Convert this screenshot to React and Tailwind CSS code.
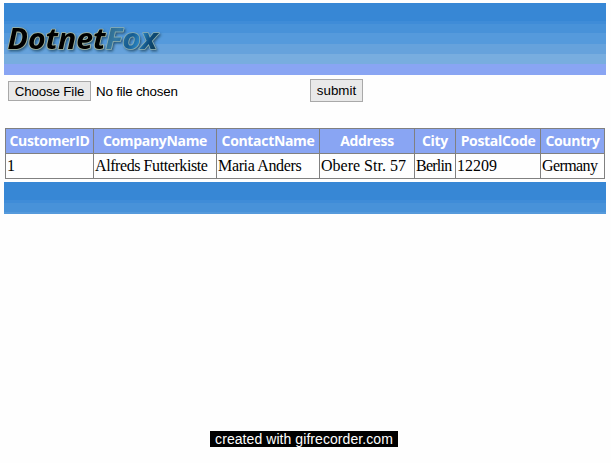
const columns = [
  { name: "CustomerID", value: "1", tracking: "tracking-normal" },
  { name: "CompanyName", value: "Alfreds Futterkiste", tracking: "tracking-[-0.42px]" },
  { name: "ContactName", value: "Maria Anders", tracking: "tracking-[-0.35px]" },
  { name: "Address", value: "Obere Str. 57", tracking: "tracking-normal" },
  { name: "City", value: "Berlin", tracking: "tracking-[-0.75px]" },
  { name: "PostalCode", value: "12209", tracking: "tracking-normal" },
  { name: "Country", value: "Germany", tracking: "tracking-[-0.6px]" },
];

function Logo() {
  return (
    <svg className="mt-1 h-14 w-[180px]" viewBox="0 0 180 56" role="img" aria-label="DotnetFox">
      <defs>
        <linearGradient id="fox" gradientUnits="userSpaceOnUse" x1="102" y1="20" x2="153" y2="42">
          <stop offset="0" stopColor="#2c6685" />
          <stop offset=".25" stopColor="#3579a4" />
          <stop offset=".5" stopColor="#155c91" />
          <stop offset=".65" stopColor="#2b84c2" />
          <stop offset=".82" stopColor="#0c4c7c" />
          <stop offset="1" stopColor="#123a50" />
        </linearGradient>
        <filter id="shade" x="-10%" y="-10%" width="120%" height="140%">
          <feDropShadow dx="1.3" dy="1.6" stdDeviation="0.8" floodColor="#234c66" floodOpacity=".8" />
        </filter>
      </defs>
      <g
        className="[font-family:'Open_Sans','Noto_Sans',sans-serif]"
        fontSize="29"
        fontWeight="700"
        fontStyle="italic"
        filter="url(#shade)"
        paintOrder="stroke"
        strokeLinejoin="round"
      >
        <text x="3.5" y="42" textLength="98" lengthAdjust="spacingAndGlyphs" fill="#000" stroke="#a3b6a0" strokeWidth="1.6">Dotnet</text>
        <text x="101.5" y="42" textLength="52" lengthAdjust="spacingAndGlyphs" fill="url(#fox)" stroke="#8cb0b0" strokeWidth="1.4">Fox</text>
      </g>
    </svg>
  );
}

export default function App() {
  return (
    <div className="h-[463px] w-[611px] overflow-hidden bg-[#fefefe] pl-1 pt-[3px] text-black">
      <header className="flex h-[72px] w-[602px] items-start bg-[linear-gradient(#3787d5_18px,#3f8cd8_18px_21px,#4892d9_21px_30px,#559adc_30px_41px,#66a2dc_41px_51px,#78addf_51px_61px,#89a5f3_61px)]">
        <Logo />
      </header>
      <form className="flex h-[53px] items-start pl-1 pt-1 text-[13.33px] leading-4 [font-family:'Liberation_Sans',Arial,sans-serif]">
        <button type="button" className="mt-[2px] h-5 w-[83px] whitespace-nowrap border border-[#a9a9a9] bg-[#e9e9e9] pt-[2px] tracking-[-0.15px]">Choose File</button>
        <span className="ml-[5px] mt-[5px] w-[214px] tracking-[-0.2px]">No file chosen</span>
        <button type="button" className="h-[23px] w-[53px] border border-[#a9a9a9] bg-[#e9e9e9] pt-px">submit</button>
      </form>
      <table className="ml-px w-[600px] table-fixed border-separate border-spacing-0 border-b border-r border-[#808080]">
        <colgroup>
          <col className="w-[88px]" />
          <col className="w-[123px]" />
          <col className="w-[103px]" />
          <col className="w-[95px]" />
          <col className="w-[41px]" />
          <col className="w-[85px]" />
          <col className="w-[64px]" />
        </colgroup>
        <thead>
          <tr>
            {columns.map((c) => (
              <th key={c.name} className="h-[25px] whitespace-nowrap border-l border-t border-[#808080] bg-[#89a5f3] p-0 text-center text-[14px] font-bold leading-5 tracking-[-0.32px] text-white [font-family:'Open_Sans','Noto_Sans',sans-serif]">
                {c.name}
              </th>
            ))}
          </tr>
        </thead>
        <tbody>
          <tr>
            {columns.map((c) => (
              <td key={c.name} className={`h-[25px] whitespace-nowrap border-l border-t border-[#808080] p-0 pl-px text-base leading-5 [font-family:'Liberation_Serif','Times_New_Roman',serif] ${c.tracking}`}>
                {c.value}
              </td>
            ))}
          </tr>
        </tbody>
      </table>
      <footer className="mt-[3px] h-8 w-[602px] bg-[linear-gradient(#3787d5_18px,#3f8cd8_18px_21px,#4892d9_21px_30px,#559adc_30px)]" />
      <div className="ml-[206px] mt-[217px] flex h-4 w-[188px] items-center justify-center whitespace-nowrap bg-black text-sm leading-4 tracking-[0.07px] text-white [font-family:'Liberation_Sans',Arial,sans-serif]">
        created with gifrecorder.com
      </div>
    </div>
  );
}
